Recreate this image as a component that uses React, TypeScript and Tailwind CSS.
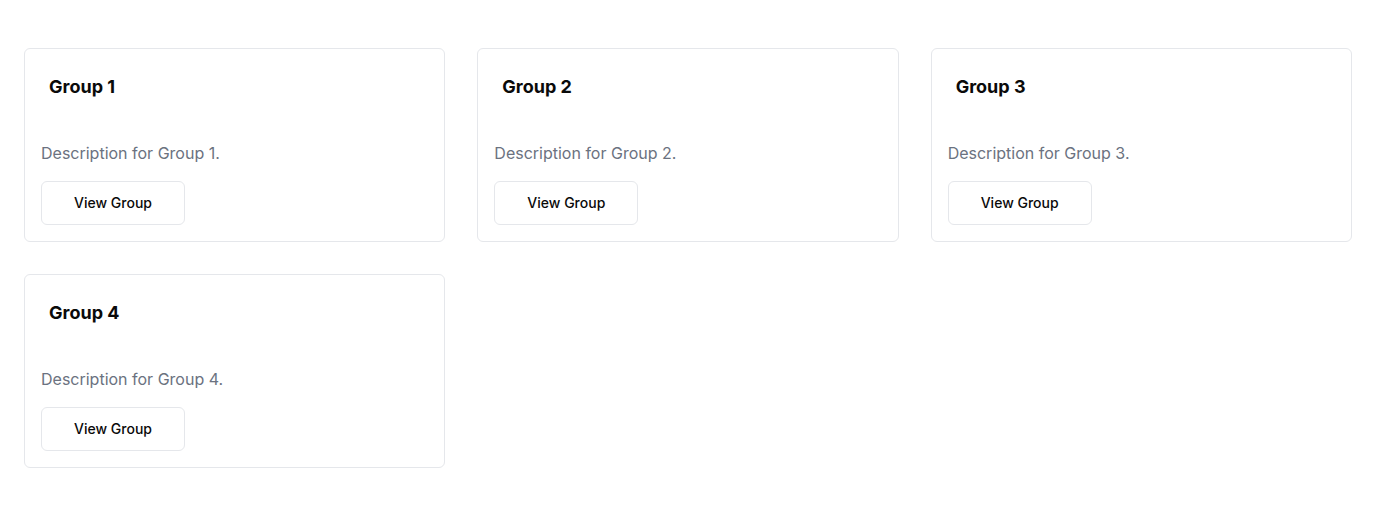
import React from "react";

const groups = [1, 2, 3, 4];

export default function App() {
  return (
    <div
      className="min-h-[516px] bg-white px-6 py-12"
      style={{ fontFamily: "Inter, 'Noto Sans', sans-serif" }}
    >
      <div className="grid grid-cols-3 gap-8">
        {groups.map((n) => (
          <div key={n} className="rounded-md border border-[#e5e7eb] bg-white">
            <div className="p-6">
              <h3 className="text-lg leading-7 font-bold text-[#0a0a0a]">Group {n}</h3>
            </div>
            <div className="px-4 pb-4 pt-4">
              <p className="text-base leading-6 text-[#6b7280]">Description for Group {n}.</p>
              <button className="mt-4 flex h-11 w-36 items-center justify-center rounded-md border border-[#e5e7eb] bg-white text-sm font-medium text-[#0a0a0a]">
                View Group
              </button>
            </div>
          </div>
        ))}
      </div>
    </div>
  );
}
